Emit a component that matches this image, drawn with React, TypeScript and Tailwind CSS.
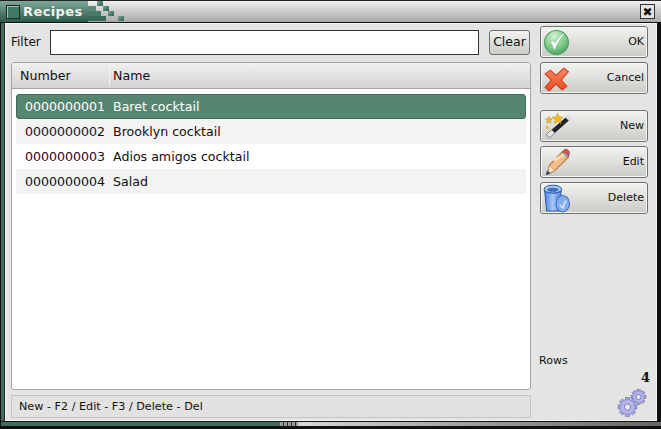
const font = { fontFamily: '"DejaVu Sans", sans-serif' };

function OkIcon() {
  return (
    <svg width="27" height="27" viewBox="0 0 26 26">
      <defs>
        <radialGradient id="okg" cx="0.4" cy="0.25" r="0.85">
          <stop offset="0" stopColor="#d4f2d0" />
          <stop offset="0.55" stopColor="#7fcb8a" />
          <stop offset="1" stopColor="#3f9a58" />
        </radialGradient>
      </defs>
      <circle cx="13" cy="13" r="11.5" fill="url(#okg)" stroke="#4b9a62" />
      <path d="M7 12.500l4.500 8.500c1.500-6 4.500-11 9-15.500l-1-1C16 7 13.500 10 11.500 13.500L10 10.500z" fill="#fff" stroke="#5aa870" strokeWidth="0.5" />
    </svg>
  );
}

function CancelIcon() {
  return (
    <svg width="27" height="27" viewBox="0 0 26 26">
      <defs>
        <linearGradient id="cxg" x1="0" y1="0" x2="0" y2="1">
          <stop offset="0" stopColor="#f98a62" />
          <stop offset="1" stopColor="#ea4a22" />
        </linearGradient>
      </defs>
      <path
        d="M2 8.500l5-3.500 5.500 5 7.500-7 4.500 3.500-7 8 5.500 6-4.500 3.500-6-5.500-6.500 6.500-4-3.500 6-7z"
        fill="url(#cxg)"
        stroke="#d03c18"
        strokeLinejoin="round"
      />
    </svg>
  );
}

function NewIcon() {
  return (
    <svg width="28" height="28" viewBox="0 0 26 26">
      <path d="M3 21L21 5l3 3L6 24z" fill="#222" />
      <path d="M3 21l5-4.500 3 3L6 24z" fill="#e8e8e8" stroke="#777" strokeWidth="0.6" />
      <path d="M21 5l1.500-1.500 3 2.500L24 8z" fill="#e8e8e8" stroke="#999" strokeWidth="0.4" />
      <path d="M13.500 1l1.500 3.500 3.700.3-2.800 2.400 1 3.600-3.400-2-3.200 2 1-3.600L8.500 4.800l3.700-.3z" fill="#f4b81e" stroke="#b88a20" strokeWidth="0.4" />
      <path d="M5.500 4l1 2.200 2.300.3-1.700 1.600.4 2.300-2-1.100-2 1.100.4-2.300L2.200 6.500l2.300-.3z" fill="#edb72e" stroke="#b88a20" strokeWidth="0.4" />
      <path d="M4 12l.7 1.400 1.500.2-1.100 1 .3 1.500-1.400-.7-1.300.7.300-1.500-1.100-1 1.500-.2z" fill="#edb72e" />
    </svg>
  );
}

function EditIcon() {
  return (
    <svg width="28" height="28" viewBox="0 0 26 26">
      <path d="M6 16L18 3.500l5.500 5-12.500 12.500-7 3.500z" fill="#f4bd8b" stroke="#b8763c" />
      <path d="M10 12L20 5.500" stroke="#fbdcb8" strokeWidth="2.500" />
      <path d="M18 3.500l2-2c1-.7 2-.5 3 .3s2 2.200 1.500 3.500l-1 3.500z" fill="#d8504a" stroke="#7d3a3a" strokeWidth="0.6" />
      <path d="M20 5l3.500 3" stroke="#58a8d8" strokeWidth="1.500" />
      <path d="M6 16l5 5-6.500 3z" fill="#f9e2c4" stroke="#b8763c" strokeWidth="0.5" />
      <path d="M2.500 25l1.500-4 2.800 2.500z" fill="#1c3f80" />
    </svg>
  );
}

function DeleteIcon() {
  return (
    <svg width="27" height="29" viewBox="0 0 26 28">
      <defs>
        <linearGradient id="dlg" x1="0" y1="0" x2="1" y2="0">
          <stop offset="0" stopColor="#4d80de" />
          <stop offset="0.5" stopColor="#a8c8f6" />
          <stop offset="1" stopColor="#4d80de" />
        </linearGradient>
      </defs>
      <path d="M1.500 6h16l-2 20h-12z" fill="url(#dlg)" stroke="#2e5fb0" />
      <ellipse cx="9.500" cy="5" rx="8.500" ry="3.800" fill="#a8c8f4" stroke="#2e5fb0" />
      <ellipse cx="9.500" cy="5.500" rx="5.500" ry="2" fill="#3f6cc0" />
      <ellipse cx="19" cy="19" rx="6.500" ry="8" fill="#84aeec" stroke="#3a6cc0" />
      <path d="M16 20l3 3 3-7" fill="none" stroke="#dbe8fb" strokeWidth="1.500" />
    </svg>
  );
}

function GearsIcon() {
  const teeth = [0, 45, 90, 135, 180, 225, 270, 315];
  const gear = (cx: number, cy: number, r: number, hole: number) => (
    <g>
      {teeth.map((a) => (
        <rect
          key={a}
          x={cx - r * 0.28}
          y={cy - r * 1.25}
          width={r * 0.56}
          height={r * 0.6}
          fill="#a9a9e4"
          stroke="#6a6aa8"
          strokeWidth="0.6"
          transform={`rotate(${a} ${cx} ${cy})`}
        />
      ))}
      <circle cx={cx} cy={cy} r={r} fill="#b4b4ea" stroke="#7a7ab8" strokeWidth="0.6" />
      <circle cx={cx} cy={cy} r={hole} fill="#eeeefa" stroke="#6a6aa8" strokeWidth="0.8" />
    </g>
  );
  return (
    <svg width="31" height="30" viewBox="0 0 31 30">
      {gear(21.500, 9, 6, 2.500)}
      {gear(10.500, 19, 7.500, 3)}
    </svg>
  );
}

function ActionButton({ label, icon }: { label: string; icon: React.ReactNode }) {
  return (
    <button className="h-8 w-[108px] flex items-center justify-between pl-[2px] pr-[3px] rounded-[3px] border border-[#6f6f6f] bg-gradient-to-b from-[#f2f2f0] via-[#dfdfdc] to-[#c9c9c6] text-[11px] text-[#111] shadow-[inset_0_0_0_1px_#f4f4f2]">
      {icon}
      <span>{label}</span>
    </button>
  );
}

function Square() {
  return <div className="w-[6px] bg-gradient-to-br from-[#7aa594] to-[#2f5f4d]" />;
}

const rows = [
  ["0000000001", "Baret cocktail"],
  ["0000000002", "Brooklyn cocktail"],
  ["0000000003", "Adios amigos cocktail"],
  ["0000000004", "Salad"],
];

export default function App() {
  return (
    <div style={font} className="w-[661px] h-[429px] overflow-hidden flex flex-col bg-[#111] text-[#111]">
      {/* title bar */}
      <div className="h-[22px] shrink-0 flex items-stretch bg-gradient-to-b from-[#f0f0ee] to-[#a8a8a6] border-t border-[#222]">
        <div className="w-[88px] flex items-center gap-[3px] pl-[6px] bg-gradient-to-b from-[#7fa898] to-[#2b5a49]">
          <div className="size-[14px] border border-[#222] bg-[#3f7a64] shadow-[inset_1px_1px_0_#9cc4b4]" />
          <span className="text-[13px] font-bold tracking-[0.4px] text-[#eef4f1]">Recipes</span>
        </div>
        <div className="w-[40px] flex flex-col">
          <div className="flex h-[5px] pl-[9px]"><Square /></div>
          <div className="flex h-[5px]"><div className="w-[8px] bg-[#5f8a79]" /><div className="ml-[7px] flex"><Square /></div></div>
          <div className="flex h-[5px]"><div className="w-[13px] bg-[#4a7a67]" /><div className="ml-[7px] flex"><Square /></div></div>
          <div className="flex h-[5px]"><div className="w-[18px] bg-[#3a6a57]" /><div className="ml-[12px] flex"><Square /></div></div>
        </div>
        <div className="flex-1 flex justify-end items-center pr-[6px]">
          <div className="size-[15px] flex items-center justify-center border border-[#333] bg-[#e4e4e2] text-[12px] font-bold leading-none">✖</div>
        </div>
      </div>
      {/* client area */}
      <div className="flex-1 min-h-0 flex pl-px border-r-[4px] border-r-[#111] border-t border-t-[#111]">
        <div className="flex-1 min-w-0 flex border-l-[3px] border-l-[#3f6f5c]">
          <div className="flex-1 min-w-0 flex bg-[#e4e4e2] border-l border-l-[#222] shadow-[inset_1px_0_0_#f6f6f6,inset_-1px_0_0_#f6f6f6,inset_0_1px_0_#f6f6f6,inset_0_-1px_0_#f6f6f6] pl-[6px] pr-[9px] pt-[3px] pb-[3px] gap-[9px]">
            <div className="flex-1 min-w-0 flex flex-col pt-[3px]">
              <div className="h-[26px] flex items-center text-[12px] pr-[1px]">
                <span className="w-[39px]">Filter</span>
                <div className="flex-1 h-[25px] bg-white border border-[#333]" />
                <button className="ml-[10px] h-[25px] w-[41px] rounded-[3px] border border-[#6f6f6f] bg-gradient-to-b from-[#f2f2f0] to-[#cbcbc8] text-[12.5px]">Clear</button>
              </div>
              <div className="mt-[7px] flex-1 min-h-0 flex flex-col bg-white rounded-[3px] border border-[#a4a4a2] overflow-hidden">
                <div className="h-[26px] shrink-0 flex items-center text-[12.6px] border-b border-[#a4a4a2] bg-gradient-to-b from-[#f0f0ee] to-[#d4d4d2]">
                  <span className="w-[98px] pl-2 border-r border-[#f6f6f6] leading-[20px]">Number</span>
                  <span className="pl-[3px] pt-px">Name</span>
                </div>
                <div className="pt-[5px] px-1 text-[12.6px]">
                  {rows.map(([num, name], i) => (
                    <div
                      key={num}
                      className={
                        i === 0
                          ? "h-[25px] flex items-center pt-px rounded-[3px] bg-[#568672] border border-[#3f6b58] text-white"
                          : i % 2 === 1
                            ? "h-[25px] flex items-center pt-px bg-[#f3f3f3] px-px"
                            : "h-[25px] flex items-center pt-px bg-white px-px"
                      }
                    >
                      <span className="w-[96px] pl-2 shrink-0">{num}</span>
                      <span>{name}</span>
                    </div>
                  ))}
                </div>
              </div>
              <div className="mt-[5px] h-[23px] shrink-0 flex items-center pl-[7px] pt-px text-[11.2px] border border-[#c4c4c2] bg-[#e2e2e0]">
                New - F2 / Edit - F3 / Delete - Del
              </div>
            </div>
            <div className="w-[108px] shrink-0 flex flex-col gap-[4px]">
              <ActionButton label="OK" icon={<OkIcon />} />
              <ActionButton label="Cancel" icon={<CancelIcon />} />
              <div className="h-[8px]" />
              <ActionButton label="New" icon={<NewIcon />} />
              <ActionButton label="Edit" icon={<EditIcon />} />
              <ActionButton label="Delete" icon={<DeleteIcon />} />
              <div className="mt-auto text-[11px] -ml-px">Rows</div>
              <div className="text-right text-[13px] font-bold -mt-[6px] -mr-[2px]" style={{ fontFamily: '"DejaVu Serif", serif' }}>4</div>
              <div className="flex justify-end -mt-[3px]"><GearsIcon /></div>
            </div>
          </div>
        </div>
      </div>
      {/* bottom frame with resize grip */}
      <div className="h-[8px] shrink-0 pl-px pt-px">
        <div className="flex h-[4px]">
          <div className="w-[279px] bg-[#3f6f5c]" />
          <div className="w-[18px] bg-[repeating-linear-gradient(90deg,#9a9a98_0,#9a9a98_3px,#333_3px,#333_4px)]" />
          <div className="flex-1 bg-gradient-to-r from-[#d8d8d6] to-[#666]" />
        </div>
      </div>
    </div>
  );
}
